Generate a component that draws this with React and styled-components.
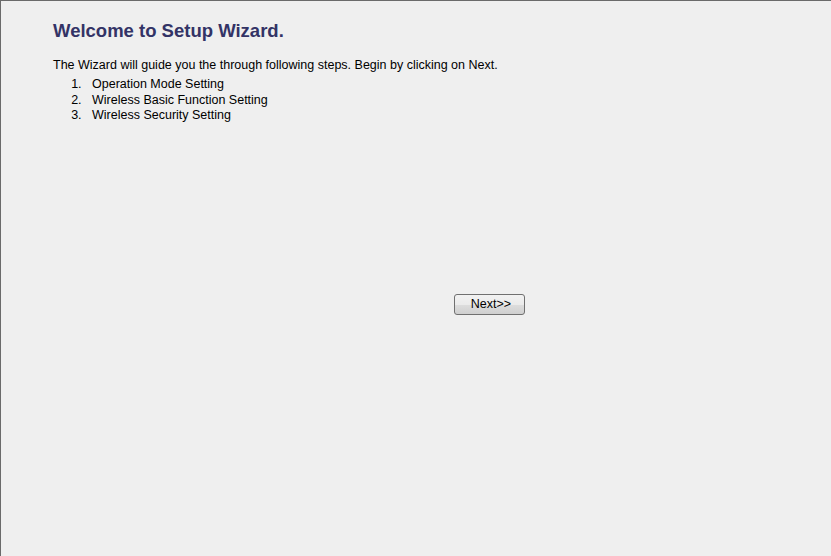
import React from "react";
import styled, { createGlobalStyle } from "styled-components";

const Global = createGlobalStyle`
  html, body { margin: 0; padding: 0; background: #efefef; }
  body { font-family: "Liberation Sans", Arial, sans-serif; }
`;

const Frame = styled.div`
  box-sizing: border-box;
  width: 831px;
  height: 556px;
  border-top: 1px solid #6a6a6a;
  border-left: 1px solid #6a6a6a;
  background: #efefef;
  padding: 0 0 0 52px;
  overflow: hidden;
`;

const Title = styled.h1`
  margin: 19px 0 0 0;
  font-size: 18.5px;
  line-height: 21px;
  font-weight: bold;
  color: #333366;
`;

const Intro = styled.p`
  margin: 17px 0 0 0;
  font-size: 12.5px;
  line-height: 15px;
  color: #000;
`;

const Steps = styled.ol`
  margin: 4px 0 0 0;
  padding: 0 0 0 39px;
  font-size: 12.5px;
  line-height: 15.5px;
  color: #000;
  li::marker { content: counter(list-item) ".   "; }
`;

const ButtonRow = styled.div`
  display: flex;
  padding-left: 401px;
  margin-top: 170px;
`;

const NavButton = styled.button`
  box-sizing: border-box;
  width: 71px;
  height: 21px;
  padding: 0 0 0 3px;
  font-family: "Liberation Sans", Arial, sans-serif;
  font-size: 12.5px;
  color: #000;
  border: 1px solid #707070;
  border-radius: 3px;
  background: linear-gradient(#f2f2f2 0%, #ebebeb 50%, #dddddd 51%, #cfcfcf 100%);
  cursor: pointer;
`;

export default function App() {
  return (
    <>
      <Global />
      <Frame>
        <Title>Welcome to Setup Wizard.</Title>
        <Intro>
          The Wizard will guide you the through following steps. Begin by clicking on Next.
        </Intro>
        <Steps>
          <li>Operation Mode Setting</li>
          <li>Wireless Basic Function Setting</li>
          <li>Wireless Security Setting</li>
        </Steps>
        <ButtonRow>
          <NavButton>Next&gt;&gt;</NavButton>
        </ButtonRow>
      </Frame>
    </>
  );
}
